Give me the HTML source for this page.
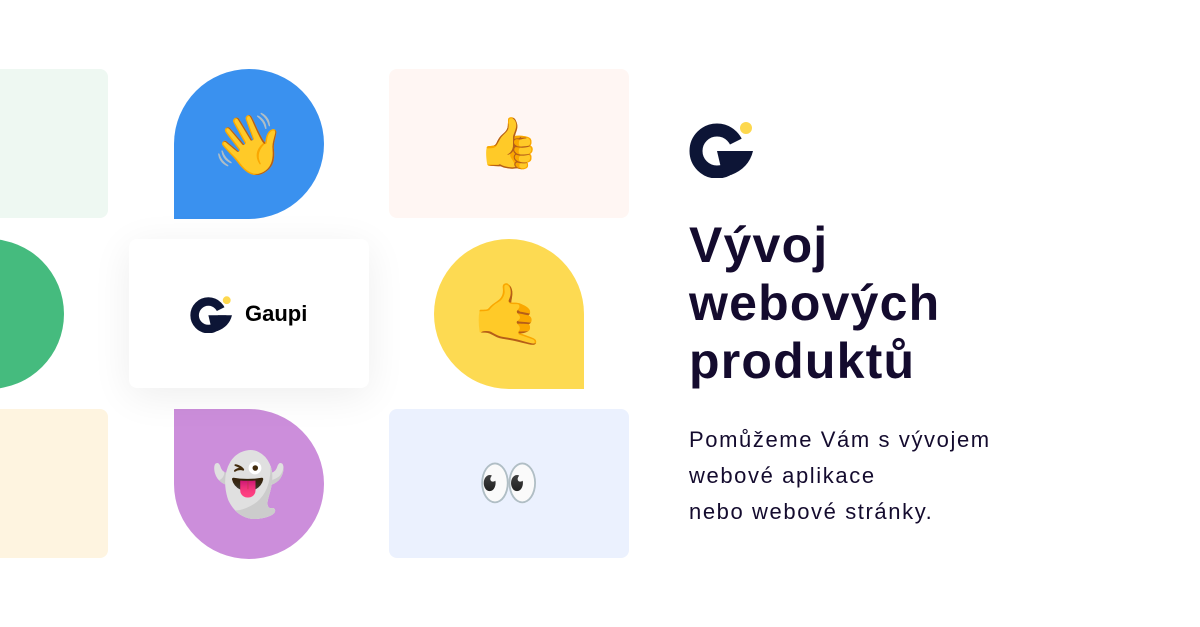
<!DOCTYPE html>
<html><head><meta charset="utf-8"><style>
*{margin:0;padding:0;box-sizing:border-box}
body{width:1200px;height:627px;background:#fff;position:relative;overflow:hidden;font-family:"Liberation Sans",sans-serif}
.a{position:absolute}
.card{border-radius:8px}
.emo{display:flex;align-items:center;justify-content:center;font-size:60px;font-family:"Noto Color Emoji","DejaVu Sans",sans-serif}
h1{position:absolute;left:689px;top:216px;font-size:50px;line-height:58px;font-weight:700;color:#140b2e;letter-spacing:1.2px}
p{position:absolute;left:689px;top:422px;font-size:22px;line-height:36px;color:#140b2e;letter-spacing:1.6px}
</style></head><body>
<div class="a card" style="left:-10px;top:69px;width:118px;height:149px;background:#eef8f2"></div>
<div class="a card emo" style="left:389px;top:69px;width:240px;height:149px;background:#fff6f3;font-size:50px">👍</div>
<div class="a card" style="left:-10px;top:409px;width:118px;height:149px;background:#fef4e0"></div>
<div class="a card emo" style="left:389px;top:409px;width:240px;height:149px;background:#ebf1fe;font-size:50px">👀</div>
<div class="a emo" style="left:174px;top:69px;width:150px;height:150px;background:#3a91ef;border-radius:75px 75px 75px 0">👋</div>
<div class="a emo" style="left:174px;top:409px;width:150px;height:150px;background:#cc8edb;border-radius:0 75px 75px 75px">👻</div>
<div class="a emo" style="left:-86px;top:239px;width:150px;height:150px;background:#45bb7e;border-radius:75px"></div>
<div class="a emo" style="left:434px;top:239px;width:150px;height:150px;background:#fdda52;border-radius:75px 75px 0 75px">🤙</div>
<div class="a card" style="left:129px;top:239px;width:240px;height:149px;background:#fff;box-shadow:0 8px 40px rgba(0,0,0,0.07)"></div>
<svg class="a" style="left:189px;top:295px" width="44" height="38" viewBox="0 0 64 58">
<circle cx="28" cy="31" r="21" fill="none" stroke="#0d1536" stroke-width="13"/>
<polygon points="28,31 62,31 62,14" fill="#fff"/>
<path d="M28 31 L64 31 Q60 48 42 55 L32 48 Z" fill="#0d1536"/>
<circle cx="56" cy="8" r="6" fill="#fdd84e"/>
</svg>
<div class="a" style="left:245px;top:301px;font-size:22px;font-weight:700;color:#000">Gaupi</div>
<svg class="a" style="left:689px;top:120px" width="64" height="58" viewBox="0 0 64 58">
<circle cx="28" cy="31" r="21" fill="none" stroke="#0d1536" stroke-width="13"/>
<polygon points="28,31 62,31 62,14" fill="#fff"/>
<path d="M28 31 L64 31 Q60 48 42 55 L32 48 Z" fill="#0d1536"/>
<circle cx="57" cy="8" r="6" fill="#fdd84e"/>
</svg>
<h1>Vývoj<br>webových<br>produktů</h1>
<p>Pomůžeme Vám s vývojem<br>webové aplikace<br>nebo webové stránky.</p>
</body></html>
